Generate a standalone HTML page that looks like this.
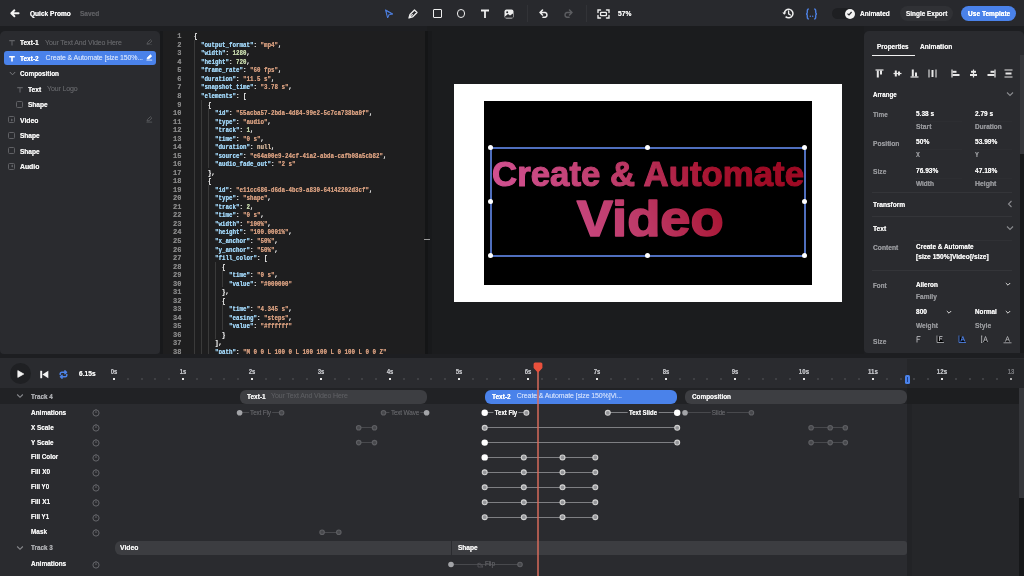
<!DOCTYPE html>
<html><head><meta charset="utf-8">
<style>
*{box-sizing:border-box;margin:0;padding:0}
html,body{width:1024px;height:576px;overflow:hidden;background:#1d1e21;font-family:"Liberation Sans",sans-serif;color:#e8e8ea}
.a{position:absolute}
#top,#lp,#ed,#cv,#rp,#tl{will-change:transform}
.b{font-weight:700;text-shadow:0 0 0.35px}
.nw{white-space:nowrap;text-shadow:0 0 0.4px}
.sb{font-weight:400;text-shadow:0 0 0.5px}
#top{left:0;top:0;width:1024px;height:26px;background:#28292d}
#lp{left:0;top:31px;width:160px;height:323px;background:#2a2b2f;border-radius:5px 5px 4px 4px}
#ed{z-index:1;overflow:hidden;left:160px;top:31px;width:272px;height:323px;background:#1e1e1f}
#cv{left:427px;top:26px;width:437px;height:328px;background:#1b1c1e}
#rp{left:864px;top:31px;width:160px;height:322px;background:#2a2b2f;border-radius:5px 5px 4px 4px}
#tl{left:0;top:358px;width:1024px;height:218px;background:#2a2b2f}
</style></head><body>
<div id="top" class="a">
  <svg class="a" style="left:9px;top:8px" width="11" height="11" viewBox="0 0 11 11"><path d="M9.6 5.3H2.6M5.4 2.3L2.3 5.3 5.4 8.3" stroke="#f4f4f4" stroke-width="1.9" fill="none" stroke-linecap="round" stroke-linejoin="round"></path></svg>
  <div class="a b nw" style="left: 30px; top: 8.89px; font-size: 7.21px; letter-spacing: 0px; color: rgb(244, 244, 245); transform: scaleX(0.911); transform-origin: 0px 50%;">Quick Promo</div>
  <div class="a b nw" style="left: 80px; top: 8.89px; font-size: 7.21px; letter-spacing: 0px; color: rgb(90, 91, 95); transform: scaleX(0.905); transform-origin: 0px 50%;">Saved</div>
  <!-- tools -->
  <svg class="a" style="left:384px;top:9px" width="10" height="10" viewBox="0 0 10 10"><path d="M1.5 0.8L8.8 5 5.2 5.6 3.6 9Z" fill="#4d7fe0" stroke="#4d7fe0" stroke-width="1" stroke-linejoin="round"></path><path d="M2.8 2.5L7 5 4.6 5.2 3.6 7.2Z" fill="#28292d"></path></svg>
  <svg class="a" style="left:408px;top:9px" width="10" height="10" viewBox="0 0 10 10"><path d="M1 9L2 5.5 6.5 1 9 3.5 4.5 8Z M1 9L3.6 6.4" stroke="#eee" stroke-width="1.3" fill="none" stroke-linejoin="round"></path><circle cx="4.2" cy="5.8" r="0.8" fill="#eee"></circle></svg>
  <div class="a" style="left:433px;top:9px;width:8.5px;height:8.5px;border:1.6px solid #eee;border-radius:1px"></div>
  <div class="a" style="left:456.5px;top:9px;width:8.5px;height:8.5px;border:1.6px solid #eee;border-radius:50%"></div>
  <svg class="a" style="left:480px;top:9px" width="10" height="10" viewBox="0 0 10 10"><path d="M1 1.5H9M5 1.5V9" stroke="#eee" stroke-width="1.8" fill="none"></path></svg>
  <svg class="a" style="left:504px;top:9px" width="10" height="10" viewBox="0 0 10 10"><rect x="0.5" y="0.5" width="9" height="9" rx="2" fill="#eee"></rect><path d="M1 7.5L4 5 6 6.5 9 4.5V8.8H1Z" fill="#28292d"></path><circle cx="3.2" cy="3.2" r="1" fill="#28292d"></circle></svg>
  <div class="a" style="left:527px;top:5px;width:1px;height:17px;background:#323337"></div>
  <svg class="a" style="left:539px;top:8.5px" width="10" height="9" viewBox="0 0 10 9"><path d="M3.5 1L1 3.5 3.5 6M1 3.5H6.2A2.5 2.5 0 0 1 6.2 8.3H4" stroke="#eee" stroke-width="1.5" fill="none" stroke-linecap="round" stroke-linejoin="round"></path></svg>
  <svg class="a" style="left:563px;top:8.5px" width="10" height="9" viewBox="0 0 10 9"><path d="M6.5 1L9 3.5 6.5 6M9 3.5H3.8A2.5 2.5 0 0 0 3.8 8.3H6" stroke="#5c5d61" stroke-width="1.5" fill="none" stroke-linecap="round" stroke-linejoin="round"></path></svg>
  <div class="a" style="left:586px;top:5px;width:1px;height:17px;background:#323337"></div>
  <svg class="a" style="left:597px;top:8.5px" width="13" height="10" viewBox="0 0 13 10"><path d="M1 3.5V1H3.5M9.5 1H12V3.5M12 6.5V9H9.5M3.5 9H1V6.5" stroke="#eee" stroke-width="1.4" fill="none" stroke-linecap="round"></path><rect x="3.6" y="3.3" width="5.8" height="3.4" rx="0.8" stroke="#eee" stroke-width="1.3" fill="none"></rect></svg>
  <div class="a b nw" style="left: 618px; top: 8.89px; font-size: 7.21px; letter-spacing: 0px; color: rgb(240, 240, 240); transform: scaleX(0.929); transform-origin: 0px 50%;">57%</div>
  <!-- right -->
  <svg class="a" style="left:782px;top:8px" width="12" height="11" viewBox="0 0 12 11"><path d="M2.3 5.5A4.3 4.3 0 1 1 3.6 8.6" stroke="#eee" stroke-width="1.5" fill="none"></path><path d="M0.3 4.6L2.3 6.8 4.3 4.6Z" fill="#eee"></path><path d="M6.6 3V5.8L8.4 7" stroke="#eee" stroke-width="1.3" fill="none" stroke-linecap="round"></path></svg>
  <svg class="a" style="left:805px;top:7.5px" width="13" height="12" viewBox="0 0 13 12"><path d="M3.8 1C2.3 1 2.3 1.8 2.3 3V4.6C2.3 5.4 1.8 6 1 6 1.8 6 2.3 6.6 2.3 7.4V9C2.3 10.2 2.3 11 3.8 11M9.2 1C10.7 1 10.7 1.8 10.7 3V4.6C10.7 5.4 11.2 6 12 6 11.2 6 10.7 6.6 10.7 7.4V9C10.7 10.2 10.7 11 9.2 11" stroke="#4d7fe0" stroke-width="1.4" fill="none"></path><circle cx="5.3" cy="8.3" r="0.75" fill="#4d7fe0"></circle><circle cx="7.7" cy="8.3" r="0.75" fill="#4d7fe0"></circle></svg>
  <div class="a" style="left:832px;top:8px;width:23px;height:11px;border-radius:6px;background:#1e1f22"></div>
  <div class="a" style="left:844.5px;top:8.5px;width:10px;height:10px;border-radius:50%;background:#f4f4f4"></div>
  <svg class="a" style="left:846px;top:10px" width="7" height="7" viewBox="0 0 7 7"><path d="M1.5 3.6L3 5 5.6 2" stroke="#28292d" stroke-width="1.2" fill="none"></path></svg>
  <div class="a b nw" style="left: 860px; top: 8.89px; font-size: 7.21px; letter-spacing: 0px; color: rgb(240, 240, 240); transform: scaleX(0.909); transform-origin: 0px 50%;">Animated</div>
  <div class="a" style="left:900px;top:5.5px;width:53px;height:15.5px;border-radius:8px;background:#303135"></div>
  <div class="a b nw" style="left: 906px; top: 8.89px; font-size: 7.21px; letter-spacing: 0px; color: rgb(236, 236, 236); transform: scaleX(0.891); transform-origin: 0px 50%;">Single Export</div>
  <div class="a" style="left:961px;top:5.5px;width:55px;height:15.5px;border-radius:8px;background:#4a82ea"></div>
  <div class="a b nw" style="left: 968px; top: 8.89px; font-size: 7.21px; letter-spacing: 0px; color: rgb(255, 255, 255); transform: scaleX(0.913); transform-origin: 0px 50%;">Use Template</div>
</div>
<div id="lp" class="a">
  <svg class="a" style="left:9.0px;top:9.0px" width="6" height="6" viewBox="0 0 6 6"><path d="M0.2 0.6H5.8M3 0.6V5.6" stroke="#606165" stroke-width="1.1" fill="none"></path></svg>
  <div class="a b nw" style="left: 20px; top: 7.39px; font-size: 7.21px; letter-spacing: 0px; color: rgb(240, 240, 240); transform: scaleX(0.905); transform-origin: 0px 50%;">Text-1</div>
  <div class="a nw" style="left:45px;top:7.5px;font-size:7px;letter-spacing:-0.12px;color:#5d5e62">Your Text And Video Here</div>
  <svg class="a" style="left:146px;top:7.8px" width="6.6" height="6.6" viewBox="0 0 8 8"><path d="M1.2 6L2 4 5.3 0.8 7 2.5 3.8 5.8Z" stroke="#606165" stroke-width="1" fill="none" stroke-linejoin="round"></path><path d="M0.5 7.4H7.5" stroke="#606165" stroke-width="0.9"></path></svg>
  <div class="a" style="left:4px;top:20px;width:152px;height:14px;border-radius:3px;background:#4a82ea"></div>
  <svg class="a" style="left:9.0px;top:24.5px" width="6" height="6" viewBox="0 0 6 6"><path d="M0.2 0.6H5.8M3 0.6V5.6" stroke="#ffffff" stroke-width="1.6" fill="none"></path></svg>
  <div class="a b nw" style="left: 20px; top: 22.89px; font-size: 7.21px; letter-spacing: 0px; color: rgb(255, 255, 255); transform: scaleX(0.905); transform-origin: 0px 50%;">Text-2</div>
  <div class="a nw" style="left:45.5px;top:23px;font-size:7px;letter-spacing:-0.12px;color:#c5d8fb">Create &amp; Automate [size 150%...</div>
  <svg class="a" style="left:146px;top:23.3px" width="6.6" height="6.6" viewBox="0 0 8 8"><path d="M1.2 6L2 4 5.3 0.8 7 2.5 3.8 5.8Z" fill="#fff" stroke="#fff" stroke-width="0.8" stroke-linejoin="round"></path><path d="M0.5 7.4H7.5" stroke="#fff" stroke-width="0.9"></path></svg>
  <svg class="a" style="left:9px;top:40px" width="7" height="5" viewBox="0 0 7 5"><path d="M0.8 1L3.5 3.8 6.2 1" stroke="#7a7b7f" stroke-width="1" fill="none"></path></svg>
  <div class="a b nw" style="left: 20px; top: 38.4px; font-size: 7.21px; letter-spacing: 0px; color: rgb(240, 240, 240); transform: scaleX(0.886); transform-origin: 0px 50%;">Composition</div>
  <svg class="a" style="left:17.0px;top:55.5px" width="6" height="6" viewBox="0 0 6 6"><path d="M0.2 0.6H5.8M3 0.6V5.6" stroke="#606165" stroke-width="1.1" fill="none"></path></svg>
  <div class="a b nw" style="left: 28px; top: 53.9px; font-size: 7.21px; letter-spacing: 0px; color: rgb(240, 240, 240); transform: scaleX(0.929); transform-origin: 0px 50%;">Text</div>
  <div class="a nw" style="left:47px;top:54px;font-size:7px;letter-spacing:-0.12px;color:#5d5e62">Your Logo</div>
  <div class="a" style="left:16px;top:69.5px;width:7px;height:7px;border:1.1px solid #606165;border-radius:1.5px"></div>
  <div class="a b nw" style="left: 28px; top: 69.39px; font-size: 7.21px; letter-spacing: 0px; color: rgb(240, 240, 240); transform: scaleX(0.909); transform-origin: 0px 50%;">Shape</div>
  <div class="a" style="left:8px;top:85px;width:7px;height:7px;border:1.1px solid #606165;border-radius:1.5px"></div>
  <svg class="a" style="left:9.5px;top:86.5px" width="4" height="4" viewBox="0 0 4 4"><path d="M1 0.5L3.2 2 1 3.5Z" fill="#606165"></path></svg>
  <div class="a b nw" style="left: 20px; top: 84.89px; font-size: 7.21px; letter-spacing: 0px; color: rgb(240, 240, 240); transform: scaleX(0.947); transform-origin: 0px 50%;">Video</div>
  <svg class="a" style="left:146px;top:85.3px" width="6.6" height="6.6" viewBox="0 0 8 8"><path d="M1.2 6L2 4 5.3 0.8 7 2.5 3.8 5.8Z" stroke="#606165" stroke-width="1" fill="none" stroke-linejoin="round"></path><path d="M0.5 7.4H7.5" stroke="#606165" stroke-width="0.9"></path></svg>
  <div class="a" style="left:8px;top:100.5px;width:7px;height:7px;border:1.1px solid #606165;border-radius:1.5px"></div>
  <div class="a b nw" style="left: 20px; top: 100.39px; font-size: 7.21px; letter-spacing: 0px; color: rgb(240, 240, 240); transform: scaleX(0.909); transform-origin: 0px 50%;">Shape</div>
  <div class="a" style="left:8px;top:116px;width:7px;height:7px;border:1.1px solid #606165;border-radius:1.5px"></div>
  <div class="a b nw" style="left: 20px; top: 115.89px; font-size: 7.21px; letter-spacing: 0px; color: rgb(240, 240, 240); transform: scaleX(0.909); transform-origin: 0px 50%;">Shape</div>
  <div class="a" style="left:8px;top:131.5px;width:7px;height:7px;border:1.1px solid #606165;border-radius:1.5px"></div>
  <svg class="a" style="left:9.5px;top:133px" width="4" height="4" viewBox="0 0 4 4"><path d="M3 0.5L0.8 2 3 3.5Z" fill="#606165"></path></svg>
  <div class="a b nw" style="left: 20px; top: 131.4px; font-size: 7.21px; letter-spacing: 0px; color: rgb(240, 240, 240); transform: scaleX(0.95); transform-origin: 0px 50%;">Audio</div>
</div>
<div id="ed" class="a">
  <style>
  #ed pre{position:absolute;font-family:"Liberation Mono",monospace;font-size:14px;line-height:17.06px;font-weight:700;white-space:pre;margin:0;text-shadow:0 0 0.8px}
  #ed i{font-style:normal}
  #ed .k{color:#9dd0f0} #ed .s{color:#d09a7c} #ed .n{color:#c2d4a8} #ed .u{color:#cdb096}
  </style>
  <div class="a" style="left:calc(-160px + 193.80px);top:calc(-31px + 40.03px);width:1px;height:315.61px;background:#3a3a3a"></div><div class="a" style="left:calc(-160px + 200.80px);top:calc(-31px + 99.74px);width:1px;height:255.90px;background:#3a3a3a"></div><div class="a" style="left:calc(-160px + 207.80px);top:calc(-31px + 108.27px);width:1px;height:59.71px;background:#3a3a3a"></div><div class="a" style="left:calc(-160px + 207.80px);top:calc(-31px + 185.04px);width:1px;height:170.60px;background:#3a3a3a"></div><div class="a" style="left:calc(-160px + 214.80px);top:calc(-31px + 261.81px);width:1px;height:76.77px;background:#3a3a3a"></div><div class="a" style="left:calc(-160px + 221.80px);top:calc(-31px + 270.34px);width:1px;height:17.06px;background:#3a3a3a"></div><div class="a" style="left:calc(-160px + 221.80px);top:calc(-31px + 304.46px);width:1px;height:25.59px;background:#3a3a3a"></div>
  <div class="a" style="left:0;top:0;width:2.7px;height:323px;background:#18191b"></div>
  <pre style="left:0.6px;top:0.8px;width:41px;text-align:right;color:#858585;transform:scale(0.5);transform-origin:0 0">1
2
3
4
5
6
7
8
9
10
11
12
13
14
15
16
17
18
19
20
21
22
23
24
25
26
27
28
29
30
31
32
33
34
35
36
37
38</pre>
  <pre style="left:33.5px;top:0.8px;color:#dedede;transform:scale(0.4165,0.5);transform-origin:0 0">{
  <i class="k">"output_format"</i>: <i class="s">"mp4"</i>,
  <i class="k">"width"</i>: <i class="n">1280</i>,
  <i class="k">"height"</i>: <i class="n">720</i>,
  <i class="k">"frame_rate"</i>: <i class="s">"60 fps"</i>,
  <i class="k">"duration"</i>: <i class="s">"11.5 s"</i>,
  <i class="k">"snapshot_time"</i>: <i class="s">"3.78 s"</i>,
  <i class="k">"elements"</i>: [
    {
      <i class="k">"id"</i>: <i class="s">"55acba57-2bda-4d84-99e2-5c7ca738ba0f"</i>,
      <i class="k">"type"</i>: <i class="s">"audio"</i>,
      <i class="k">"track"</i>: <i class="n">1</i>,
      <i class="k">"time"</i>: <i class="s">"0 s"</i>,
      <i class="k">"duration"</i>: <i class="u">null</i>,
      <i class="k">"source"</i>: <i class="s">"e64a00e9-24cf-41a2-abda-cafb08a5cb82"</i>,
      <i class="k">"audio_fade_out"</i>: <i class="s">"2 s"</i>
    },
    {
      <i class="k">"id"</i>: <i class="s">"e11cc686-d6da-4bc9-a830-64142202d3cf"</i>,
      <i class="k">"type"</i>: <i class="s">"shape"</i>,
      <i class="k">"track"</i>: <i class="n">2</i>,
      <i class="k">"time"</i>: <i class="s">"0 s"</i>,
      <i class="k">"width"</i>: <i class="s">"100%"</i>,
      <i class="k">"height"</i>: <i class="s">"100.0001%"</i>,
      <i class="k">"x_anchor"</i>: <i class="s">"50%"</i>,
      <i class="k">"y_anchor"</i>: <i class="s">"50%"</i>,
      <i class="k">"fill_color"</i>: [
        {
          <i class="k">"time"</i>: <i class="s">"0 s"</i>,
          <i class="k">"value"</i>: <i class="s">"#000000"</i>
        },
        {
          <i class="k">"time"</i>: <i class="s">"4.345 s"</i>,
          <i class="k">"easing"</i>: <i class="s">"steps"</i>,
          <i class="k">"value"</i>: <i class="s">"#ffffff"</i>
        }
      ],
      <i class="k">"path"</i>: <i class="s">"M 0 0 L 100 0 L 100 100 L 0 100 L 0 0 Z"</i></pre>
  <div class="a" style="left:265px;top:0;width:3px;height:323px;background:#141516"></div><div class="a" style="left:268px;top:0;width:4px;height:323px;background:#18191b"></div>
  <div class="a" style="left:264px;top:207.8px;width:6px;height:1.6px;background:#9a9a9a"></div>
</div>
<div id="cv" class="a">
  <div class="a" style="left:27.0px;top:58px;width:388px;height:218px;background:#fff"></div>
  <div class="a" style="left:57.0px;top:75px;width:328px;height:184px;background:#000"></div>
  <div class="a" style="left:63px;top:121px;width:316px;height:109.5px;border:2px solid #4f6ebd"></div>
  <svg class="a" style="left:0;top:0" width="437" height="328" viewBox="427 26 437 328">
    <defs><linearGradient id="tg" gradientUnits="userSpaceOnUse" x1="530" y1="250" x2="760" y2="150">
      <stop offset="0" stop-color="#d0508f"></stop><stop offset="0.45" stop-color="#bd3a68"></stop><stop offset="0.8" stop-color="#a6122e"></stop><stop offset="1" stop-color="#9e0a24"></stop>
    </linearGradient></defs>
    <g font-family="Liberation Sans" font-weight="700" fill="url(#tg)" stroke="url(#tg)" stroke-linejoin="round">
      <text x="492" y="185.8" font-size="35" stroke-width="1.1" textLength="312" lengthAdjust="spacingAndGlyphs">Create &amp; Automate</text>
      <text x="576.8" y="235.6" font-size="50" stroke-width="1.6" textLength="147" lengthAdjust="spacingAndGlyphs">Video</text>
    </g>
  </svg>
<div class="a" style="left:61.2px;top:119.1px;width:5.2px;height:5.2px;border-radius:50%;background:#fff"></div><div class="a" style="left:218.1px;top:119.1px;width:5.2px;height:5.2px;border-radius:50%;background:#fff"></div><div class="a" style="left:375.0px;top:119.1px;width:5.2px;height:5.2px;border-radius:50%;background:#fff"></div><div class="a" style="left:61.2px;top:172.9px;width:5.2px;height:5.2px;border-radius:50%;background:#fff"></div><div class="a" style="left:375.0px;top:172.9px;width:5.2px;height:5.2px;border-radius:50%;background:#fff"></div><div class="a" style="left:61.2px;top:226.6px;width:5.2px;height:5.2px;border-radius:50%;background:#fff"></div><div class="a" style="left:218.1px;top:226.6px;width:5.2px;height:5.2px;border-radius:50%;background:#fff"></div><div class="a" style="left:375.0px;top:226.6px;width:5.2px;height:5.2px;border-radius:50%;background:#fff"></div>
</div>
<div id="rp" class="a">
<div class="a" style="left:51px;top:89.5px;width:47px;height:1px;background:#2d2e32"></div><div class="a" style="left:110px;top:89.5px;width:38px;height:1px;background:#2d2e32"></div><div class="a" style="left:51px;top:118px;width:47px;height:1px;background:#2d2e32"></div><div class="a" style="left:110px;top:118px;width:38px;height:1px;background:#2d2e32"></div><div class="a" style="left:51px;top:146.5px;width:47px;height:1px;background:#2d2e32"></div><div class="a" style="left:110px;top:146.5px;width:38px;height:1px;background:#2d2e32"></div>
<div class="a b nw" style="left: 13px; top: 11.09px; font-size: 7.21px; letter-spacing: 0px; color: rgb(240, 240, 240); transform: scaleX(0.889); transform-origin: 0px 50%;">Properties</div>
<div class="a b nw" style="left: 56px; top: 11.09px; font-size: 7.21px; letter-spacing: 0px; color: rgb(240, 240, 240); transform: scaleX(0.914); transform-origin: 0px 50%;">Animation</div>
<div class="a" style="left:8.0px;top:23.6px;width:43px;height:1.5px;background:#f2f2f2"></div>
<svg class="a" style="left:11.1px;top:37.8px" width="9" height="9" viewBox="0 0 9 9"><path d="M0.5 1H8.5" stroke="#e8e8e8" stroke-width="1.2"></path><rect x="1.8" y="1.5" width="2" height="7" fill="#e8e8e8"></rect><rect x="5" y="1.5" width="2" height="4" fill="#e8e8e8"></rect></svg>
<svg class="a" style="left:28.6px;top:37.8px" width="9" height="9" viewBox="0 0 9 9"><path d="M0.5 4.5H8.5" stroke="#e8e8e8" stroke-width="1.2"></path><rect x="1.8" y="1.5" width="2" height="6" fill="#e8e8e8"></rect><rect x="5" y="2.5" width="2" height="4" fill="#e8e8e8"></rect></svg>
<svg class="a" style="left:46.3px;top:37.8px" width="9" height="9" viewBox="0 0 9 9"><path d="M0.5 8H8.5" stroke="#e8e8e8" stroke-width="1.2"></path><rect x="1.8" y="0.5" width="2" height="7" fill="#e8e8e8"></rect><rect x="5" y="3.5" width="2" height="4" fill="#e8e8e8"></rect></svg>
<svg class="a" style="left:63.8px;top:37.8px" width="9" height="9" viewBox="0 0 9 9"><path d="M1 0.5V8.5M8 0.5V8.5" stroke="#e8e8e8" stroke-width="1.1"></path><rect x="3.5" y="1" width="2" height="7" fill="#e8e8e8"></rect></svg>
<svg class="a" style="left:87.4px;top:37.8px" width="9" height="9" viewBox="0 0 9 9"><path d="M1 0.5V8.5" stroke="#e8e8e8" stroke-width="1.2"></path><rect x="1.5" y="1.8" width="4" height="2" fill="#e8e8e8"></rect><rect x="1.5" y="5" width="7" height="2" fill="#e8e8e8"></rect></svg>
<svg class="a" style="left:104.9px;top:37.8px" width="9" height="9" viewBox="0 0 9 9"><path d="M4.5 0.5V8.5" stroke="#e8e8e8" stroke-width="1.2"></path><rect x="2" y="1.8" width="5" height="2" fill="#e8e8e8"></rect><rect x="1" y="5" width="7" height="2" fill="#e8e8e8"></rect></svg>
<svg class="a" style="left:122.8px;top:37.8px" width="9" height="9" viewBox="0 0 9 9"><path d="M8 0.5V8.5" stroke="#e8e8e8" stroke-width="1.2"></path><rect x="3.5" y="1.8" width="4" height="2" fill="#e8e8e8"></rect><rect x="0.5" y="5" width="7" height="2" fill="#e8e8e8"></rect></svg>
<svg class="a" style="left:140.3px;top:37.8px" width="9" height="9" viewBox="0 0 9 9"><path d="M0.5 1H8.5M0.5 8H8.5" stroke="#e8e8e8" stroke-width="1.1"></path><rect x="1.5" y="3.5" width="6" height="2" fill="#e8e8e8"></rect></svg>
<div class="a b nw" style="left: 8.6px; top: 59.2px; font-size: 7.21px; letter-spacing: 0px; color: rgb(240, 240, 240); transform: scaleX(0.857); transform-origin: 0px 50%;">Arrange</div>
<svg class="a" style="left:141.8px;top:60.4px" width="8" height="6" viewBox="0 0 8 6"><path d="M1 1.5L4 4.5 7 1.5" stroke="#8a8b8f" stroke-width="1.1" fill="none"></path></svg>
<div class="a b nw" style="left: 8.6px; top: 78.69px; font-size: 7.21px; letter-spacing: 0px; color: rgb(146, 147, 151); transform: scaleX(0.882); transform-origin: 0px 50%;">Time</div>
<div class="a b nw" style="left: 51.9px; top: 77.89px; font-size: 7.21px; letter-spacing: 0px; color: rgb(240, 240, 240); transform: scaleX(0.9); transform-origin: 0px 50%;">5.38 s</div>
<div class="a b nw" style="left: 110.9px; top: 77.89px; font-size: 7.21px; letter-spacing: 0px; color: rgb(240, 240, 240); transform: scaleX(0.9); transform-origin: 0px 50%;">2.79 s</div>
<div class="a b nw" style="left: 51.9px; top: 90.8px; font-size: 7.21px; letter-spacing: 0px; color: rgb(146, 147, 151); transform: scaleX(0.938); transform-origin: 0px 50%;">Start</div>
<div class="a b nw" style="left: 110.9px; top: 90.8px; font-size: 7.21px; letter-spacing: 0px; color: rgb(146, 147, 151); transform: scaleX(0.9); transform-origin: 0px 50%;">Duration</div>
<div class="a b nw" style="left: 8.6px; top: 107.69px; font-size: 7.21px; letter-spacing: 0px; color: rgb(146, 147, 151); transform: scaleX(0.929); transform-origin: 0px 50%;">Position</div>
<div class="a b nw" style="left: 51.9px; top: 106.49px; font-size: 7.21px; letter-spacing: 0px; color: rgb(240, 240, 240); transform: scaleX(0.929); transform-origin: 0px 50%;">50%</div>
<div class="a b nw" style="left: 110.9px; top: 106.49px; font-size: 7.21px; letter-spacing: 0px; color: rgb(240, 240, 240); transform: scaleX(0.917); transform-origin: 0px 50%;">53.99%</div>
<div class="a b nw" style="left: 51.9px; top: 119.19px; font-size: 7.21px; letter-spacing: 0px; color: rgb(146, 147, 151); transform: scaleX(0.8); transform-origin: 0px 50%;">X</div>
<div class="a b nw" style="left: 110.9px; top: 119.19px; font-size: 7.21px; letter-spacing: 0px; color: rgb(146, 147, 151); transform: scaleX(0.8); transform-origin: 0px 50%;">Y</div>
<div class="a b nw" style="left: 8.6px; top: 135.8px; font-size: 7.21px; letter-spacing: 0px; color: rgb(146, 147, 151); transform: scaleX(0.929); transform-origin: 0px 50%;">Size</div>
<div class="a b nw" style="left: 51.9px; top: 135.3px; font-size: 7.21px; letter-spacing: 0px; color: rgb(240, 240, 240); transform: scaleX(0.917); transform-origin: 0px 50%;">76.93%</div>
<div class="a b nw" style="left: 110.9px; top: 135.3px; font-size: 7.21px; letter-spacing: 0px; color: rgb(240, 240, 240); transform: scaleX(0.917); transform-origin: 0px 50%;">47.18%</div>
<div class="a b nw" style="left: 51.9px; top: 147.9px; font-size: 7.21px; letter-spacing: 0px; color: rgb(146, 147, 151); transform: scaleX(0.9); transform-origin: 0px 50%;">Width</div>
<div class="a b nw" style="left: 110.9px; top: 147.9px; font-size: 7.21px; letter-spacing: 0px; color: rgb(146, 147, 151); transform: scaleX(0.955); transform-origin: 0px 50%;">Height</div>
<div class="a" style="left:8.0px;top:161.0px;width:140px;height:1px;background:#343539"></div>
<div class="a b nw" style="left: 8.6px; top: 169px; font-size: 7.21px; letter-spacing: 0px; color: rgb(240, 240, 240); transform: scaleX(0.914); transform-origin: 0px 50%;">Transform</div>
<svg class="a" style="left:142.9px;top:169.2px" width="6" height="8" viewBox="0 0 6 8"><path d="M4.5 1L1.5 4 4.5 7" stroke="#8a8b8f" stroke-width="1.1" fill="none"></path></svg>
<div class="a" style="left:8.0px;top:185.3px;width:140px;height:1px;background:#343539"></div>
<div class="a b nw" style="left: 8.6px; top: 193.09px; font-size: 7.21px; letter-spacing: 0px; color: rgb(240, 240, 240); transform: scaleX(0.929); transform-origin: 0px 50%;">Text</div>
<svg class="a" style="left:141.8px;top:194.3px" width="8" height="6" viewBox="0 0 8 6"><path d="M1 1.5L4 4.5 7 1.5" stroke="#8a8b8f" stroke-width="1.1" fill="none"></path></svg>
<div class="a b nw" style="left: 8.6px; top: 212.3px; font-size: 7.21px; letter-spacing: 0px; color: rgb(146, 147, 151); transform: scaleX(0.926); transform-origin: 0px 50%;">Content</div>
<div class="a b nw" style="left: 52px; top: 211.4px; font-size: 7.21px; letter-spacing: 0px; color: rgb(240, 240, 240); transform: scaleX(0.892); transform-origin: 0px 50%;">Create &amp; Automate</div>
<div class="a b nw" style="left: 52px; top: 221.2px; font-size: 7.21px; letter-spacing: 0px; color: rgb(240, 240, 240); transform: scaleX(0.924); transform-origin: 0px 50%;">[size 150%]Video[/size]</div><div class="a" style="left:50px;top:209px;width:98px;height:1px;background:#303135"></div>
<div class="a" style="left:8.0px;top:239.2px;width:140px;height:1px;background:#343539"></div>
<div class="a b nw" style="left: 8.6px; top: 249.8px; font-size: 7.21px; letter-spacing: 0px; color: rgb(146, 147, 151); transform: scaleX(0.875); transform-origin: 0px 50%;">Font</div>
<div class="a b nw" style="left: 52px; top: 248.59px; font-size: 7.21px; letter-spacing: 0px; color: rgb(240, 240, 240); transform: scaleX(0.88); transform-origin: 0px 50%;">Aileron</div>
<svg class="a" style="left:140.0px;top:249.8px" width="8" height="6" viewBox="0 0 8 6"><path d="M1.8 2L4 4.2 6.2 2" stroke="#d8d8d8" stroke-width="1" fill="none"></path></svg>
<div class="a b nw" style="left: 52px; top: 261px; font-size: 7.21px; letter-spacing: 0px; color: rgb(146, 147, 151); transform: scaleX(0.913); transform-origin: 0px 50%;">Family</div>
<div class="a b nw" style="left: 52px; top: 276.29px; font-size: 7.21px; letter-spacing: 0px; color: rgb(240, 240, 240); transform: scaleX(0.917); transform-origin: 0px 50%;">800</div>
<svg class="a" style="left:80.5px;top:277.5px" width="8" height="6" viewBox="0 0 8 6"><path d="M1.8 2L4 4.2 6.2 2" stroke="#d8d8d8" stroke-width="1" fill="none"></path></svg>
<div class="a b nw" style="left: 110.5px; top: 276.29px; font-size: 7.21px; letter-spacing: 0px; color: rgb(240, 240, 240); transform: scaleX(0.88); transform-origin: 0px 50%;">Normal</div>
<svg class="a" style="left:140.0px;top:277.5px" width="8" height="6" viewBox="0 0 8 6"><path d="M1.8 2L4 4.2 6.2 2" stroke="#d8d8d8" stroke-width="1" fill="none"></path></svg>
<div class="a b nw" style="left: 52px; top: 289.59px; font-size: 7.21px; letter-spacing: 0px; color: rgb(146, 147, 151); transform: scaleX(0.917); transform-origin: 0px 50%;">Weight</div>
<div class="a b nw" style="left: 110.5px; top: 289.59px; font-size: 7.21px; letter-spacing: 0px; color: rgb(146, 147, 151); transform: scaleX(0.941); transform-origin: 0px 50%;">Style</div>
<div class="a b nw" style="left: 8.6px; top: 305.79px; font-size: 7.21px; letter-spacing: 0px; color: rgb(146, 147, 151); transform: scaleX(0.929); transform-origin: 0px 50%;">Size</div>
<svg class="a" style="left:49.5px;top:304.4px" width="9" height="9" viewBox="0 0 9 9"><path d="M3 1.5H6.5M3 1.5V7.5M3 4.3H5.8" stroke="#a8a9ad" stroke-width="1"></path></svg>
<svg class="a" style="left:71.7px;top:304.4px" width="9" height="9" viewBox="0 0 9 9"><path d="M1 0.5V7.5H8" stroke="#a8a9ad" stroke-width="0.9"></path><path d="M3.5 1.5H6.5M3.5 1.5V6M3.5 3.8H6" stroke="#a8a9ad" stroke-width="1"></path></svg>
<svg class="a" style="left:93.9px;top:304.4px" width="9" height="9" viewBox="0 0 9 9"><path d="M1 0.5V7.5H8" stroke="#4d7fe0" stroke-width="0.9"></path><path d="M2.8 6.5L4.8 1.5 6.8 6.5M3.5 4.8H6" stroke="#4d7fe0" stroke-width="1"></path></svg>
<svg class="a" style="left:116.0px;top:304.4px" width="9" height="9" viewBox="0 0 9 9"><path d="M1 1H2.3M1.6 1V7.5M1 7.5H2.3" stroke="#a8a9ad" stroke-width="0.9"></path><path d="M3.5 7L5.5 1.5 7.5 7M4.2 5H6.8" stroke="#a8a9ad" stroke-width="1"></path></svg>
<svg class="a" style="left:139.0px;top:304.4px" width="9" height="9" viewBox="0 0 9 9"><path d="M0.5 7.8H8.5" stroke="#a8a9ad" stroke-width="0.9"></path><path d="M2.5 6.5L4.5 1.5 6.5 6.5M3.2 4.8H5.8" stroke="#a8a9ad" stroke-width="1"></path></svg>
<div class="a" style="left:156px;top:24px;width:4px;height:99px;background:#36373b"></div><div class="a" style="left:156px;top:123px;width:4px;height:199px;background:#18191b"></div>
</div>
<div id="tl" class="a">
<div class="a" style="left:907.0px;top:0.8px;width:112.0px;height:217.2px;background:#252629;border-radius:0px;"></div>
<div class="a" style="left:907.0px;top:46.4px;width:5.0px;height:171.6px;background:#222326;border-radius:0px;"></div>
<div class="a" style="left:0.0px;top:30.0px;width:1019.0px;height:16.4px;background:#212225;border-radius:0px;"></div>
<div class="a" style="left:906.5px;top:30.0px;width:112.5px;height:16.4px;background:#1d1e20;border-radius:0px;"></div>
<div class="a" style="left:1019.0px;top:0.8px;width:5.0px;height:29.2px;background:#252629;border-radius:0px;"></div>
<div class="a" style="left:1019.0px;top:30.0px;width:5.0px;height:110.0px;background:#35363a;border-radius:0px;"></div>
<div class="a" style="left:1019.0px;top:140.0px;width:5.0px;height:78.0px;background:#161719;border-radius:0px;"></div>
<div class="a" style="left:10.2px;top:5.199999999999989px;width:21px;height:21px;border-radius:50%;background:#1f2023"></div>
<svg class="a" style="left:16px;top:11px" width="10" height="10" viewBox="0 0 10 10"><path d="M1.8 1.6L7.8 5 1.8 8.4Z" fill="#f4f4f4" stroke="#f4f4f4" stroke-width="0.7" stroke-linejoin="round"></path></svg>
<svg class="a" style="left:40px;top:11.5px" width="9" height="9" viewBox="0 0 9 9"><path d="M1.2 0.8V8.2" stroke="#f4f4f4" stroke-width="1.9"></path><path d="M8.3 0.8L2.4 4.5 8.3 8.2Z" fill="#f4f4f4"></path></svg>
<svg class="a" style="left:58.5px;top:11.5px" width="9" height="9" viewBox="0 0 9 9"><path d="M1.2 4.6V3.8A1.5 1.5 0 0 1 2.7 2.3H7.4M5.9 0.9L7.5 2.3 5.9 3.7M7.8 4.4V5.2A1.5 1.5 0 0 1 6.3 6.7H1.6M3.1 5.3L1.5 6.7 3.1 8.1" stroke="#4d84ea" stroke-width="1.5" fill="none" stroke-linecap="round" stroke-linejoin="round"></path></svg>
<div class="a b nw" style="left: 78.8px; top: 11.49px; font-size: 7.42px; letter-spacing: 0px; color: rgb(242, 242, 242); transform: scaleX(0.895); transform-origin: 0px 50%;">6.15s</div>
<div class="a b nw" style="left: 114px; top: 9.7px; font-size: 6.8px; letter-spacing: 0px; color: rgb(185, 186, 190); transform: translateX(-50%) scaleX(0.875); transform-origin: 50% 50%;">0s</div>
<div class="a" style="left:113.0px;top:20.0px;width:2.0px;height:2.0px;background:#e6e6e6;border-radius:0px;"></div>
<div class="a" style="left:127.0px;top:20.0px;width:2.0px;height:2.0px;background:#3f4044;border-radius:0px;"></div>
<div class="a" style="left:141.0px;top:20.0px;width:2.0px;height:2.0px;background:#3f4044;border-radius:0px;"></div>
<div class="a" style="left:154.0px;top:20.0px;width:2.0px;height:2.0px;background:#3f4044;border-radius:0px;"></div>
<div class="a" style="left:168.0px;top:20.0px;width:2.0px;height:2.0px;background:#3f4044;border-radius:0px;"></div>
<div class="a b nw" style="left: 183px; top: 9.7px; font-size: 6.8px; letter-spacing: 0px; color: rgb(185, 186, 190); transform: translateX(-50%) scaleX(0.875); transform-origin: 50% 50%;">1s</div>
<div class="a" style="left:182.0px;top:20.0px;width:2.0px;height:2.0px;background:#e6e6e6;border-radius:0px;"></div>
<div class="a" style="left:196.0px;top:20.0px;width:2.0px;height:2.0px;background:#3f4044;border-radius:0px;"></div>
<div class="a" style="left:210.0px;top:20.0px;width:2.0px;height:2.0px;background:#3f4044;border-radius:0px;"></div>
<div class="a" style="left:223.0px;top:20.0px;width:2.0px;height:2.0px;background:#3f4044;border-radius:0px;"></div>
<div class="a" style="left:237.0px;top:20.0px;width:2.0px;height:2.0px;background:#3f4044;border-radius:0px;"></div>
<div class="a b nw" style="left: 252px; top: 9.7px; font-size: 6.8px; letter-spacing: 0px; color: rgb(185, 186, 190); transform: translateX(-50%) scaleX(0.875); transform-origin: 50% 50%;">2s</div>
<div class="a" style="left:251.0px;top:20.0px;width:2.0px;height:2.0px;background:#e6e6e6;border-radius:0px;"></div>
<div class="a" style="left:265.0px;top:20.0px;width:2.0px;height:2.0px;background:#3f4044;border-radius:0px;"></div>
<div class="a" style="left:279.0px;top:20.0px;width:2.0px;height:2.0px;background:#3f4044;border-radius:0px;"></div>
<div class="a" style="left:292.0px;top:20.0px;width:2.0px;height:2.0px;background:#3f4044;border-radius:0px;"></div>
<div class="a" style="left:306.0px;top:20.0px;width:2.0px;height:2.0px;background:#3f4044;border-radius:0px;"></div>
<div class="a b nw" style="left: 321px; top: 9.7px; font-size: 6.8px; letter-spacing: 0px; color: rgb(185, 186, 190); transform: translateX(-50%) scaleX(0.875); transform-origin: 50% 50%;">3s</div>
<div class="a" style="left:320.0px;top:20.0px;width:2.0px;height:2.0px;background:#e6e6e6;border-radius:0px;"></div>
<div class="a" style="left:334.0px;top:20.0px;width:2.0px;height:2.0px;background:#3f4044;border-radius:0px;"></div>
<div class="a" style="left:348.0px;top:20.0px;width:2.0px;height:2.0px;background:#3f4044;border-radius:0px;"></div>
<div class="a" style="left:361.0px;top:20.0px;width:2.0px;height:2.0px;background:#3f4044;border-radius:0px;"></div>
<div class="a" style="left:375.0px;top:20.0px;width:2.0px;height:2.0px;background:#3f4044;border-radius:0px;"></div>
<div class="a b nw" style="left: 390px; top: 9.7px; font-size: 6.8px; letter-spacing: 0px; color: rgb(185, 186, 190); transform: translateX(-50%) scaleX(0.875); transform-origin: 50% 50%;">4s</div>
<div class="a" style="left:389.0px;top:20.0px;width:2.0px;height:2.0px;background:#e6e6e6;border-radius:0px;"></div>
<div class="a" style="left:403.0px;top:20.0px;width:2.0px;height:2.0px;background:#3f4044;border-radius:0px;"></div>
<div class="a" style="left:417.0px;top:20.0px;width:2.0px;height:2.0px;background:#3f4044;border-radius:0px;"></div>
<div class="a" style="left:430.0px;top:20.0px;width:2.0px;height:2.0px;background:#3f4044;border-radius:0px;"></div>
<div class="a" style="left:444.0px;top:20.0px;width:2.0px;height:2.0px;background:#3f4044;border-radius:0px;"></div>
<div class="a b nw" style="left: 459px; top: 9.7px; font-size: 6.8px; letter-spacing: 0px; color: rgb(185, 186, 190); transform: translateX(-50%) scaleX(0.875); transform-origin: 50% 50%;">5s</div>
<div class="a" style="left:458.0px;top:20.0px;width:2.0px;height:2.0px;background:#e6e6e6;border-radius:0px;"></div>
<div class="a" style="left:472.0px;top:20.0px;width:2.0px;height:2.0px;background:#3f4044;border-radius:0px;"></div>
<div class="a" style="left:486.0px;top:20.0px;width:2.0px;height:2.0px;background:#3f4044;border-radius:0px;"></div>
<div class="a" style="left:499.0px;top:20.0px;width:2.0px;height:2.0px;background:#3f4044;border-radius:0px;"></div>
<div class="a" style="left:513.0px;top:20.0px;width:2.0px;height:2.0px;background:#3f4044;border-radius:0px;"></div>
<div class="a b nw" style="left: 528px; top: 9.7px; font-size: 6.8px; letter-spacing: 0px; color: rgb(185, 186, 190); transform: translateX(-50%) scaleX(0.875); transform-origin: 50% 50%;">6s</div>
<div class="a" style="left:527.0px;top:20.0px;width:2.0px;height:2.0px;background:#e6e6e6;border-radius:0px;"></div>
<div class="a" style="left:541.0px;top:20.0px;width:2.0px;height:2.0px;background:#3f4044;border-radius:0px;"></div>
<div class="a" style="left:555.0px;top:20.0px;width:2.0px;height:2.0px;background:#3f4044;border-radius:0px;"></div>
<div class="a" style="left:568.0px;top:20.0px;width:2.0px;height:2.0px;background:#3f4044;border-radius:0px;"></div>
<div class="a" style="left:582.0px;top:20.0px;width:2.0px;height:2.0px;background:#3f4044;border-radius:0px;"></div>
<div class="a b nw" style="left: 597px; top: 9.7px; font-size: 6.8px; letter-spacing: 0px; color: rgb(185, 186, 190); transform: translateX(-50%) scaleX(0.875); transform-origin: 50% 50%;">7s</div>
<div class="a" style="left:596.0px;top:20.0px;width:2.0px;height:2.0px;background:#e6e6e6;border-radius:0px;"></div>
<div class="a" style="left:610.0px;top:20.0px;width:2.0px;height:2.0px;background:#3f4044;border-radius:0px;"></div>
<div class="a" style="left:624.0px;top:20.0px;width:2.0px;height:2.0px;background:#3f4044;border-radius:0px;"></div>
<div class="a" style="left:637.0px;top:20.0px;width:2.0px;height:2.0px;background:#3f4044;border-radius:0px;"></div>
<div class="a" style="left:651.0px;top:20.0px;width:2.0px;height:2.0px;background:#3f4044;border-radius:0px;"></div>
<div class="a b nw" style="left: 666px; top: 9.7px; font-size: 6.8px; letter-spacing: 0px; color: rgb(185, 186, 190); transform: translateX(-50%) scaleX(0.875); transform-origin: 50% 50%;">8s</div>
<div class="a" style="left:665.0px;top:20.0px;width:2.0px;height:2.0px;background:#e6e6e6;border-radius:0px;"></div>
<div class="a" style="left:679.0px;top:20.0px;width:2.0px;height:2.0px;background:#3f4044;border-radius:0px;"></div>
<div class="a" style="left:693.0px;top:20.0px;width:2.0px;height:2.0px;background:#3f4044;border-radius:0px;"></div>
<div class="a" style="left:706.0px;top:20.0px;width:2.0px;height:2.0px;background:#3f4044;border-radius:0px;"></div>
<div class="a" style="left:720.0px;top:20.0px;width:2.0px;height:2.0px;background:#3f4044;border-radius:0px;"></div>
<div class="a b nw" style="left: 735px; top: 9.7px; font-size: 6.8px; letter-spacing: 0px; color: rgb(185, 186, 190); transform: translateX(-50%) scaleX(0.875); transform-origin: 50% 50%;">9s</div>
<div class="a" style="left:734.0px;top:20.0px;width:2.0px;height:2.0px;background:#e6e6e6;border-radius:0px;"></div>
<div class="a" style="left:748.0px;top:20.0px;width:2.0px;height:2.0px;background:#3f4044;border-radius:0px;"></div>
<div class="a" style="left:762.0px;top:20.0px;width:2.0px;height:2.0px;background:#3f4044;border-radius:0px;"></div>
<div class="a" style="left:775.0px;top:20.0px;width:2.0px;height:2.0px;background:#3f4044;border-radius:0px;"></div>
<div class="a" style="left:789.0px;top:20.0px;width:2.0px;height:2.0px;background:#3f4044;border-radius:0px;"></div>
<div class="a b nw" style="left: 804px; top: 9.7px; font-size: 6.8px; letter-spacing: 0px; color: rgb(185, 186, 190); transform: translateX(-50%) scaleX(0.909); transform-origin: 50% 50%;">10s</div>
<div class="a" style="left:803.0px;top:20.0px;width:2.0px;height:2.0px;background:#e6e6e6;border-radius:0px;"></div>
<div class="a" style="left:817.0px;top:20.0px;width:2.0px;height:2.0px;background:#3f4044;border-radius:0px;"></div>
<div class="a" style="left:831.0px;top:20.0px;width:2.0px;height:2.0px;background:#3f4044;border-radius:0px;"></div>
<div class="a" style="left:844.0px;top:20.0px;width:2.0px;height:2.0px;background:#3f4044;border-radius:0px;"></div>
<div class="a" style="left:858.0px;top:20.0px;width:2.0px;height:2.0px;background:#3f4044;border-radius:0px;"></div>
<div class="a b nw" style="left: 873px; top: 9.7px; font-size: 6.8px; letter-spacing: 0px; color: rgb(185, 186, 190); transform: translateX(-50%) scaleX(0.909); transform-origin: 50% 50%;">11s</div>
<div class="a" style="left:872.0px;top:20.0px;width:2.0px;height:2.0px;background:#e6e6e6;border-radius:0px;"></div>
<div class="a" style="left:886.0px;top:20.0px;width:2.0px;height:2.0px;background:#3f4044;border-radius:0px;"></div>
<div class="a" style="left:900.0px;top:20.0px;width:2.0px;height:2.0px;background:#3f4044;border-radius:0px;"></div>
<div class="a" style="left:913.0px;top:20.0px;width:2.0px;height:2.0px;background:#3f4044;border-radius:0px;"></div>
<div class="a" style="left:927.0px;top:20.0px;width:2.0px;height:2.0px;background:#3f4044;border-radius:0px;"></div>
<div class="a b nw" style="left: 942px; top: 9.7px; font-size: 6.8px; letter-spacing: 0px; color: rgb(185, 186, 190); transform: translateX(-50%) scaleX(0.909); transform-origin: 50% 50%;">12s</div>
<div class="a" style="left:941.0px;top:20.0px;width:2.0px;height:2.0px;background:#e6e6e6;border-radius:0px;"></div>
<div class="a" style="left:955.0px;top:20.0px;width:2.0px;height:2.0px;background:#3f4044;border-radius:0px;"></div>
<div class="a" style="left:969.0px;top:20.0px;width:2.0px;height:2.0px;background:#3f4044;border-radius:0px;"></div>
<div class="a" style="left:982.0px;top:20.0px;width:2.0px;height:2.0px;background:#3f4044;border-radius:0px;"></div>
<div class="a" style="left:996.0px;top:20.0px;width:2.0px;height:2.0px;background:#3f4044;border-radius:0px;"></div>
<div class="a b nw" style="left: 1011px; top: 9.7px; font-size: 6.8px; letter-spacing: 0px; color: rgb(112, 113, 117); transform: translateX(-50%) scaleX(0.875); transform-origin: 50% 50%;">13</div>
<div class="a" style="left:1010.0px;top:20.0px;width:2.0px;height:2.0px;background:#a8a8a8;border-radius:0px;"></div>
<div class="a" style="left:905.0px;top:16.8px;width:5.2px;height:9.0px;background:#4a82ea;border-radius:1.5px;"></div>
<div class="a" style="left:907.1px;top:19.0px;width:1.0px;height:5.0px;background:#1d3f8a;border-radius:0px;"></div>
<svg class="a" style="left:15.5px;top:35.4px" width="8" height="6" viewBox="0 0 8 6"><path d="M1.2 1.5L4 4.3 6.8 1.5" stroke="#8a8b8f" stroke-width="1.1" fill="none"></path></svg>
<div class="a b nw" style="left: 31.2px; top: 33.7px; font-size: 7.21px; letter-spacing: 0px; color: rgb(169, 170, 174); transform: scaleX(0.88); transform-origin: 0px 50%;">Track 4</div>
<div class="a b nw" style="left: 30.8px; top: 49.9px; font-size: 7.21px; letter-spacing: 0px; color: rgb(238, 238, 238); transform: scaleX(0.897); transform-origin: 0px 50%;">Animations</div>
<svg class="a" style="left:91.7px;top:50.3px" width="8" height="9" viewBox="0 0 8 9"><circle cx="4" cy="5" r="3.1" stroke="#6b6c70" stroke-width="0.9" fill="none"></circle><path d="M4 1.2V2M4 3.2V5" stroke="#6b6c70" stroke-width="0.9"></path></svg>
<div class="a b nw" style="left: 30.8px; top: 64.89px; font-size: 7.21px; letter-spacing: 0px; color: rgb(238, 238, 238); transform: scaleX(0.885); transform-origin: 0px 50%;">X Scale</div>
<svg class="a" style="left:91.7px;top:65.3px" width="8" height="9" viewBox="0 0 8 9"><circle cx="4" cy="5" r="3.1" stroke="#6b6c70" stroke-width="0.9" fill="none"></circle><path d="M4 1.2V2M4 3.2V5" stroke="#6b6c70" stroke-width="0.9"></path></svg>
<div class="a b nw" style="left: 30.8px; top: 79.69px; font-size: 7.21px; letter-spacing: 0px; color: rgb(238, 238, 238); transform: scaleX(0.885); transform-origin: 0px 50%;">Y Scale</div>
<svg class="a" style="left:91.7px;top:80.1px" width="8" height="9" viewBox="0 0 8 9"><circle cx="4" cy="5" r="3.1" stroke="#6b6c70" stroke-width="0.9" fill="none"></circle><path d="M4 1.2V2M4 3.2V5" stroke="#6b6c70" stroke-width="0.9"></path></svg>
<div class="a b nw" style="left: 30.8px; top: 94.49px; font-size: 7.21px; letter-spacing: 0px; color: rgb(238, 238, 238); transform: scaleX(0.871); transform-origin: 0px 50%;">Fill Color</div>
<svg class="a" style="left:91.7px;top:94.9px" width="8" height="9" viewBox="0 0 8 9"><circle cx="4" cy="5" r="3.1" stroke="#6b6c70" stroke-width="0.9" fill="none"></circle><path d="M4 1.2V2M4 3.2V5" stroke="#6b6c70" stroke-width="0.9"></path></svg>
<div class="a b nw" style="left: 30.8px; top: 109.39px; font-size: 7.21px; letter-spacing: 0px; color: rgb(238, 238, 238); transform: scaleX(0.905); transform-origin: 0px 50%;">Fill X0</div>
<svg class="a" style="left:91.7px;top:109.8px" width="8" height="9" viewBox="0 0 8 9"><circle cx="4" cy="5" r="3.1" stroke="#6b6c70" stroke-width="0.9" fill="none"></circle><path d="M4 1.2V2M4 3.2V5" stroke="#6b6c70" stroke-width="0.9"></path></svg>
<div class="a b nw" style="left: 30.8px; top: 124.39px; font-size: 7.21px; letter-spacing: 0px; color: rgb(238, 238, 238); transform: scaleX(0.857); transform-origin: 0px 50%;">Fill Y0</div>
<svg class="a" style="left:91.7px;top:124.8px" width="8" height="9" viewBox="0 0 8 9"><circle cx="4" cy="5" r="3.1" stroke="#6b6c70" stroke-width="0.9" fill="none"></circle><path d="M4 1.2V2M4 3.2V5" stroke="#6b6c70" stroke-width="0.9"></path></svg>
<div class="a b nw" style="left: 30.8px; top: 139.4px; font-size: 7.21px; letter-spacing: 0px; color: rgb(238, 238, 238); transform: scaleX(0.905); transform-origin: 0px 50%;">Fill X1</div>
<svg class="a" style="left:91.7px;top:139.8px" width="8" height="9" viewBox="0 0 8 9"><circle cx="4" cy="5" r="3.1" stroke="#6b6c70" stroke-width="0.9" fill="none"></circle><path d="M4 1.2V2M4 3.2V5" stroke="#6b6c70" stroke-width="0.9"></path></svg>
<div class="a b nw" style="left: 30.8px; top: 154.3px; font-size: 7.21px; letter-spacing: 0px; color: rgb(238, 238, 238); transform: scaleX(0.857); transform-origin: 0px 50%;">Fill Y1</div>
<svg class="a" style="left:91.7px;top:154.7px" width="8" height="9" viewBox="0 0 8 9"><circle cx="4" cy="5" r="3.1" stroke="#6b6c70" stroke-width="0.9" fill="none"></circle><path d="M4 1.2V2M4 3.2V5" stroke="#6b6c70" stroke-width="0.9"></path></svg>
<div class="a b nw" style="left: 30.8px; top: 169.2px; font-size: 7.21px; letter-spacing: 0px; color: rgb(238, 238, 238); transform: scaleX(0.889); transform-origin: 0px 50%;">Mask</div>
<svg class="a" style="left:91.7px;top:169.6px" width="8" height="9" viewBox="0 0 8 9"><circle cx="4" cy="5" r="3.1" stroke="#6b6c70" stroke-width="0.9" fill="none"></circle><path d="M4 1.2V2M4 3.2V5" stroke="#6b6c70" stroke-width="0.9"></path></svg>
<svg class="a" style="left:15.5px;top:186.8px" width="8" height="6" viewBox="0 0 8 6"><path d="M1.2 1.5L4 4.3 6.8 1.5" stroke="#8a8b8f" stroke-width="1.1" fill="none"></path></svg>
<div class="a b nw" style="left: 31.2px; top: 184.9px; font-size: 7.21px; letter-spacing: 0px; color: rgb(169, 170, 174); transform: scaleX(0.88); transform-origin: 0px 50%;">Track 3</div>
<div class="a b nw" style="left: 30.8px; top: 201.09px; font-size: 7.21px; letter-spacing: 0px; color: rgb(238, 238, 238); transform: scaleX(0.897); transform-origin: 0px 50%;">Animations</div>
<svg class="a" style="left:91.7px;top:201.5px" width="8" height="9" viewBox="0 0 8 9"><circle cx="4" cy="5" r="3.1" stroke="#6b6c70" stroke-width="0.9" fill="none"></circle><path d="M4 1.2V2M4 3.2V5" stroke="#6b6c70" stroke-width="0.9"></path></svg>
<svg class="a" style="left:91.7px;top:216.5px" width="8" height="9" viewBox="0 0 8 9"><circle cx="4" cy="5" r="3.1" stroke="#6b6c70" stroke-width="0.9" fill="none"></circle><path d="M4 1.2V2M4 3.2V5" stroke="#6b6c70" stroke-width="0.9"></path></svg>
<div class="a" style="left:240.2px;top:31.7px;width:186.4px;height:14.3px;background:#3d3e42;border-radius:6px;"></div>
<div class="a b nw" style="left: 246.5px; top: 33.7px; font-size: 7.21px; letter-spacing: 0px; color: rgb(240, 240, 240); transform: scaleX(0.905); transform-origin: 0px 50%;">Text-1</div>
<div class="a nw" style="left:271.0px;top:33.8px;font-size:7px;letter-spacing:-0.12px;color:#57585c;">Your Text And Video Here</div>
<div class="a" style="left:484.6px;top:31.7px;width:192.9px;height:14.3px;background:#4a82ea;border-radius:6px;"></div>
<div class="a b nw" style="left: 492px; top: 33.7px; font-size: 7.21px; letter-spacing: 0px; color: rgb(255, 255, 255); transform: scaleX(0.905); transform-origin: 0px 50%;">Text-2</div>
<div class="a nw" style="left:516.7px;top:33.8px;font-size:7px;letter-spacing:-0.12px;color:#c3d6fb;">Create &amp; Automate [size 150%]Vi...</div>
<div class="a" style="left:684.9px;top:31.7px;width:222.1px;height:14.3px;background:#3d3e42;border-radius:6px;"></div>
<div class="a b nw" style="left: 691.6px; top: 33.7px; font-size: 7.21px; letter-spacing: 0px; color: rgb(240, 240, 240); transform: scaleX(0.886); transform-origin: 0px 50%;">Composition</div>
<div class="a" style="left:114.8px;top:183.2px;width:336.4px;height:14.0px;background:#3c3d41;border-radius:6px;border-radius:6px 0 0 6px"></div>
<div class="a b nw" style="left: 120px; top: 185.3px; font-size: 7.21px; letter-spacing: 0px; color: rgb(240, 240, 240); transform: scaleX(0.947); transform-origin: 0px 50%;">Video</div>
<div class="a" style="left:451.2px;top:183.2px;width:455.8px;height:14.0px;background:#3c3d41;border-radius:0px;border-radius:0 3px 3px 0"></div>
<div class="a" style="left:451.0px;top:183.2px;width:0.8px;height:14.0px;background:#2a2b2f;border-radius:0px;"></div>
<div class="a b nw" style="left: 457.7px; top: 185.3px; font-size: 7.21px; letter-spacing: 0px; color: rgb(240, 240, 240); transform: scaleX(0.909); transform-origin: 0px 50%;">Shape</div>
<div class="a" style="left:239.6px;top:54.3px;width:42.0px;height:1.0px;background:#48494d;border-radius:0px;"></div>


<div class="a nw" style="left:260.5px;top:51.4px;font-size:6.4px;letter-spacing:-0.15px;color:#5c5d61;transform:translateX(-50%);background:#2a2b2f;padding:0 1.5px;line-height:7.4px;">Text Fly</div>
<div class="a" style="left:383.5px;top:54.3px;width:43.1px;height:1.0px;background:#48494d;border-radius:0px;"></div>


<div class="a nw" style="left:405.0px;top:51.4px;font-size:6.4px;letter-spacing:-0.15px;color:#5c5d61;transform:translateX(-50%);background:#2a2b2f;padding:0 1.5px;line-height:7.4px;">Text Wave</div>
<div class="a" style="left:484.7px;top:54.2px;width:41.7px;height:1.1px;background:#7e7f83;border-radius:0px;"></div>
<div class="a b nw" style="left: 505.5px; top: 51.2px; font-size: 6.8px; letter-spacing: 0px; color: rgb(240, 240, 240); transform: translateX(-50%) scaleX(0.893); background: rgb(42, 43, 47); padding: 0px 1.5px; line-height: 7.6px; transform-origin: 50% 50%;">Text Fly</div>


<div class="a" style="left:607.8px;top:54.2px;width:69.4px;height:1.1px;background:#7e7f83;border-radius:0px;"></div>
<div class="a b nw" style="left: 643px; top: 51.2px; font-size: 6.8px; letter-spacing: 0px; color: rgb(240, 240, 240); transform: translateX(-50%) scaleX(0.886); background: rgb(42, 43, 47); padding: 0px 1.5px; line-height: 7.6px; transform-origin: 50% 50%;">Text Slide</div>


<div class="a" style="left:685.0px;top:54.3px;width:66.4px;height:1.0px;background:#48494d;border-radius:0px;"></div>
<div class="a nw" style="left:718.5px;top:51.4px;font-size:6.4px;letter-spacing:-0.15px;color:#5c5d61;transform:translateX(-50%);background:#2a2b2f;padding:0 1.5px;line-height:7.4px;">Slide</div>


<div class="a" style="left:358.7px;top:69.3px;width:15.8px;height:1.0px;background:#48494d;border-radius:0px;"></div>


<div class="a" style="left:811.1px;top:69.3px;width:34.2px;height:1.0px;background:#48494d;border-radius:0px;"></div>



<div class="a" style="left:484.7px;top:69.2px;width:192.5px;height:1.1px;background:#7e7f83;border-radius:0px;"></div>


<div class="a" style="left:358.7px;top:84.1px;width:15.8px;height:1.0px;background:#48494d;border-radius:0px;"></div>


<div class="a" style="left:811.1px;top:84.1px;width:34.2px;height:1.0px;background:#48494d;border-radius:0px;"></div>



<div class="a" style="left:484.7px;top:84.1px;width:192.5px;height:1.1px;background:#7e7f83;border-radius:0px;"></div>


<div class="a" style="left:484.7px;top:98.8px;width:110.6px;height:1.1px;background:#7e7f83;border-radius:0px;"></div>




<div class="a" style="left:484.7px;top:113.8px;width:110.6px;height:1.1px;background:#7e7f83;border-radius:0px;"></div>




<div class="a" style="left:484.7px;top:128.8px;width:110.6px;height:1.1px;background:#7e7f83;border-radius:0px;"></div>




<div class="a" style="left:484.7px;top:143.8px;width:110.6px;height:1.1px;background:#7e7f83;border-radius:0px;"></div>




<div class="a" style="left:484.7px;top:158.7px;width:110.6px;height:1.1px;background:#7e7f83;border-radius:0px;"></div>




<div class="a" style="left:322.1px;top:173.7px;width:16.7px;height:1.0px;background:#48494d;border-radius:0px;"></div>


<div class="a" style="left:451.0px;top:206.0px;width:69.0px;height:1.0px;background:#48494d;border-radius:0px;"></div>


<svg class="a" style="left:477px;top:203.5px" width="7" height="6" viewBox="0 0 7 6"><path d="M1 1V5H6ZM2.2 1L6 3.5" stroke="#55565a" stroke-width="0.8" fill="none"></path></svg>
<div class="a nw" style="left:485.0px;top:202.1px;font-size:6.4px;letter-spacing:-0.1px;color:#5c5d61;">Flip</div>
<svg class="a" style="left:0;top:0" width="1024" height="218" viewBox="0 358 1024 218"><circle cx="239.6" cy="412.8" r="2.8" fill="#a3a4a8"></circle><circle cx="281.6" cy="412.8" r="2.25" fill="#47484c" stroke="#5e5f63" stroke-width="1.1"></circle><circle cx="383.5" cy="412.8" r="2.25" fill="#47484c" stroke="#5e5f63" stroke-width="1.1"></circle><circle cx="426.6" cy="412.8" r="2.8" fill="#a3a4a8"></circle><circle cx="484.7" cy="412.8" r="3.2" fill="#ffffff"></circle><circle cx="526.4" cy="412.8" r="2.45" fill="#939498" stroke="#d2d2d2" stroke-width="1.1"></circle><circle cx="607.8" cy="412.8" r="2.45" fill="#939498" stroke="#d2d2d2" stroke-width="1.1"></circle><circle cx="677.2" cy="412.8" r="3.2" fill="#ffffff"></circle><circle cx="685" cy="412.8" r="2.8" fill="#a3a4a8"></circle><circle cx="751.4" cy="412.8" r="2.25" fill="#47484c" stroke="#5e5f63" stroke-width="1.1"></circle><circle cx="358.7" cy="427.8" r="2.25" fill="#47484c" stroke="#5e5f63" stroke-width="1.1"></circle><circle cx="374.5" cy="427.8" r="2.25" fill="#47484c" stroke="#5e5f63" stroke-width="1.1"></circle><circle cx="811.1" cy="427.8" r="2.25" fill="#47484c" stroke="#5e5f63" stroke-width="1.1"></circle><circle cx="830.2" cy="427.8" r="2.25" fill="#47484c" stroke="#5e5f63" stroke-width="1.1"></circle><circle cx="845.3" cy="427.8" r="2.25" fill="#47484c" stroke="#5e5f63" stroke-width="1.1"></circle><circle cx="484.7" cy="427.8" r="2.45" fill="#939498" stroke="#d2d2d2" stroke-width="1.1"></circle><circle cx="677.2" cy="427.8" r="2.45" fill="#939498" stroke="#d2d2d2" stroke-width="1.1"></circle><circle cx="358.7" cy="442.6" r="2.25" fill="#47484c" stroke="#5e5f63" stroke-width="1.1"></circle><circle cx="374.5" cy="442.6" r="2.25" fill="#47484c" stroke="#5e5f63" stroke-width="1.1"></circle><circle cx="811.1" cy="442.6" r="2.25" fill="#47484c" stroke="#5e5f63" stroke-width="1.1"></circle><circle cx="830.2" cy="442.6" r="2.25" fill="#47484c" stroke="#5e5f63" stroke-width="1.1"></circle><circle cx="845.3" cy="442.6" r="2.25" fill="#47484c" stroke="#5e5f63" stroke-width="1.1"></circle><circle cx="484.7" cy="442.6" r="3.2" fill="#ffffff"></circle><circle cx="677.2" cy="442.6" r="2.45" fill="#939498" stroke="#d2d2d2" stroke-width="1.1"></circle><circle cx="484.7" cy="457.4" r="3.2" fill="#ffffff"></circle><circle cx="523.8" cy="457.4" r="2.45" fill="#939498" stroke="#d2d2d2" stroke-width="1.1"></circle><circle cx="562.5" cy="457.4" r="2.45" fill="#939498" stroke="#d2d2d2" stroke-width="1.1"></circle><circle cx="595.3" cy="457.4" r="2.45" fill="#939498" stroke="#d2d2d2" stroke-width="1.1"></circle><circle cx="484.7" cy="472.3" r="2.45" fill="#939498" stroke="#d2d2d2" stroke-width="1.1"></circle><circle cx="523.8" cy="472.3" r="2.45" fill="#939498" stroke="#d2d2d2" stroke-width="1.1"></circle><circle cx="562.5" cy="472.3" r="2.45" fill="#939498" stroke="#d2d2d2" stroke-width="1.1"></circle><circle cx="595.3" cy="472.3" r="2.45" fill="#939498" stroke="#d2d2d2" stroke-width="1.1"></circle><circle cx="484.7" cy="487.3" r="2.45" fill="#939498" stroke="#d2d2d2" stroke-width="1.1"></circle><circle cx="523.8" cy="487.3" r="2.45" fill="#939498" stroke="#d2d2d2" stroke-width="1.1"></circle><circle cx="562.5" cy="487.3" r="2.45" fill="#939498" stroke="#d2d2d2" stroke-width="1.1"></circle><circle cx="595.3" cy="487.3" r="2.45" fill="#939498" stroke="#d2d2d2" stroke-width="1.1"></circle><circle cx="484.7" cy="502.3" r="2.45" fill="#939498" stroke="#d2d2d2" stroke-width="1.1"></circle><circle cx="523.8" cy="502.3" r="2.45" fill="#939498" stroke="#d2d2d2" stroke-width="1.1"></circle><circle cx="562.5" cy="502.3" r="2.45" fill="#939498" stroke="#d2d2d2" stroke-width="1.1"></circle><circle cx="595.3" cy="502.3" r="2.45" fill="#939498" stroke="#d2d2d2" stroke-width="1.1"></circle><circle cx="484.7" cy="517.2" r="2.45" fill="#939498" stroke="#d2d2d2" stroke-width="1.1"></circle><circle cx="523.8" cy="517.2" r="2.45" fill="#939498" stroke="#d2d2d2" stroke-width="1.1"></circle><circle cx="562.5" cy="517.2" r="2.45" fill="#939498" stroke="#d2d2d2" stroke-width="1.1"></circle><circle cx="595.3" cy="517.2" r="2.45" fill="#939498" stroke="#d2d2d2" stroke-width="1.1"></circle><circle cx="322.1" cy="532.2" r="2.25" fill="#47484c" stroke="#5e5f63" stroke-width="1.1"></circle><circle cx="338.8" cy="532.2" r="2.25" fill="#47484c" stroke="#5e5f63" stroke-width="1.1"></circle><circle cx="451" cy="564.5" r="2.8" fill="#a3a4a8"></circle><circle cx="520" cy="564.5" r="2.25" fill="#47484c" stroke="#5e5f63" stroke-width="1.1"></circle></svg>
<div class="a" style="left:537.3px;top:12.0px;width:1.8px;height:206.0px;background:rgba(222,108,92,0.72);border-radius:0px;"></div>
<svg class="a" style="left:533px;top:3.5px" width="10" height="11" viewBox="0 0 10 11"><path d="M0.6 2A1.5 1.5 0 0 1 2.1 0.5H7.9A1.5 1.5 0 0 1 9.4 2V6L5 10.8 0.6 6Z" fill="#e9503c"></path></svg>
</div>

</body></html>
